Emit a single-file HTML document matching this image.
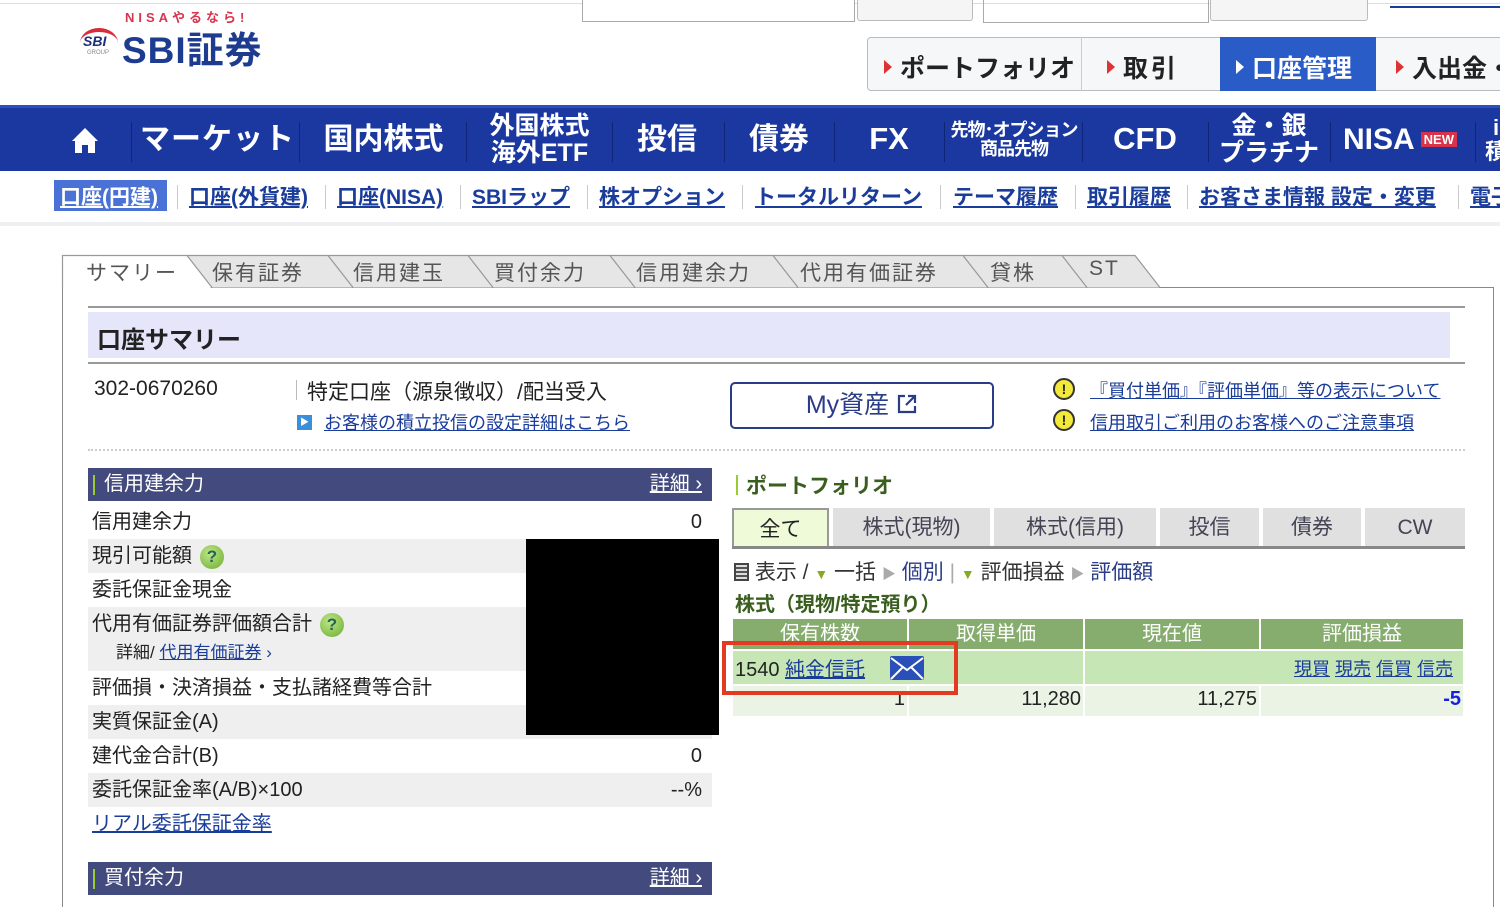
<!DOCTYPE html>
<html><head><meta charset="utf-8"><style>
*{margin:0;padding:0;box-sizing:border-box}
body{width:1500px;height:899px;overflow:hidden;background:#fff;font-family:"Liberation Sans","Noto Sans CJK JP",sans-serif;color:#222;position:relative}
.a{position:absolute;white-space:nowrap}
a,.lk{color:#1a3c9a;text-decoration:underline}
.nav{position:absolute;top:105px;left:0;width:1500px;height:66px;background:#1b38a0;border-top:3px solid #2c4fc0}
.nav .i{position:absolute;top:0;height:63px;color:#fff;font-weight:bold;display:flex;align-items:center;justify-content:center;text-align:center;line-height:1.05}
.nav .s{position:absolute;top:14px;width:1px;height:40px;background:#0f2578}
.sub{font-size:21px;font-weight:bold;top:181px}
.sep{position:absolute;top:185px;width:1px;height:24px;background:#ccc}
.tt{position:absolute;top:257px;font-size:21px;color:#555;letter-spacing:2px}
.row{position:absolute;left:88px;width:624px;height:34px;font-size:20px;line-height:34px;padding-left:4px}
.g{background:#efefef}
.bar{position:absolute;left:88px;width:624px;height:33px;background:#424a7e;color:#fff;font-size:20px;line-height:33px;padding-left:16px}
.bar:before{content:"";position:absolute;left:5px;top:7px;width:2px;height:20px;background:#9c3}
.bar span{position:absolute;right:10px;color:#fff;text-decoration:underline}
.pt{position:absolute;top:508px;height:39px;background:#e0e0e0;font-size:21px;color:#445;text-align:center;line-height:40px}
.th{position:absolute;top:619px;height:30px;background:#86ac6e;color:#fff;font-size:20px;text-align:center;line-height:30px}
.q{display:inline-block;width:24px;height:24px;border-radius:50%;background:radial-gradient(circle at 40% 35%,#bfe58a,#6aad2c);color:#265;font-size:17px;font-weight:bold;text-align:center;line-height:24px;vertical-align:middle;margin-left:8px}
.tri{display:inline-block;width:0;height:0;border-top:7px solid transparent;border-bottom:7px solid transparent;border-left:8px solid #d33;margin-right:8px;vertical-align:3px}
.tm{font-size:25px;font-weight:bold;color:#222;top:49px}
</style></head><body>
<div class="a" style="top:0;left:0;width:1500px;height:4px;border-bottom:1px solid #ddd"></div>
<!-- logo -->
<div class="a" style="left:125px;top:7px;font-size:13px;color:#d8354f;font-weight:bold;letter-spacing:4px">NISAやるなら!</div>
<div class="a" style="left:80px;top:28px;width:38px;height:30px;border-top:4px solid #d62d3a;border-radius:50% 50% 0 0;"></div>
<div class="a" style="left:83px;top:33px;font-size:14px;font-weight:bold;font-style:italic;color:#1d2f7a">SBI</div>
<div class="a" style="left:87px;top:50px;font-size:6px;color:#888">GROUP</div>
<div class="a" style="left:122px;top:20px;font-size:37px;font-weight:bold;color:#1d3c8f;letter-spacing:1px">SBI証券</div>
<!-- top search boxes -->
<div class="a" style="left:582px;top:0;width:273px;height:22px;border:1px solid #aaa;border-top:none;background:#fff"></div>
<div class="a" style="left:857px;top:0;width:116px;height:21px;border:1px solid #bbb;border-top:none;background:#f5f5f5;border-radius:0 0 3px 3px"></div>
<div class="a" style="left:983px;top:0;width:226px;height:23px;border:1px solid #aaa;border-top:none"></div>
<div class="a" style="left:1210px;top:0;width:158px;height:21px;border:1px solid #bbb;border-top:none;background:#f5f5f5;border-radius:0 0 3px 3px"></div>
<div class="a" style="left:1390px;top:0;width:110px;height:8px;border-bottom:2px solid #1a3c9a"></div>
<!-- top menu -->
<div class="a" style="left:867px;top:37px;width:640px;height:54px;border:1px solid #bbb;border-radius:4px;background:#f6f7f9"></div>
<div class="a" style="left:1081px;top:37px;width:1px;height:54px;background:#ccc"></div>
<div class="a" style="left:1220px;top:37px;width:156px;height:54px;background:#2a5cc8"></div>
<div class="a tm" style="left:884px"><span class="tri"></span>ポートフォリオ</div>
<div class="a tm" style="left:1107px;letter-spacing:3px"><span class="tri"></span>取引</div>
<div class="a tm" style="left:1236px;color:#fff"><span class="tri" style="border-left-color:#fff"></span>口座管理</div>
<div class="a tm" style="left:1396px"><span class="tri"></span>入出金・</div>
<!-- blue nav -->
<div class="nav">
<div class="i" style="left:60px;width:50px"><svg width="28" height="28" viewBox="0 0 28 28"><path d="M14 2 L27 15 L24 15 L24 27 L17 27 L17 19 L11 19 L11 27 L4 27 L4 15 L1 15 Z" fill="#fff"/></svg></div>
<div class="s" style="left:131px"></div>
<div class="i" style="left:135px;width:165px;font-size:30px;letter-spacing:1px">マーケット</div>
<div class="s" style="left:299px"></div>
<div class="i" style="left:300px;width:167px;font-size:30px">国内株式</div>
<div class="s" style="left:466px"></div>
<div class="i" style="left:467px;width:145px;font-size:25px">外国株式<br>海外ETF</div>
<div class="s" style="left:612px"></div>
<div class="i" style="left:612px;width:110px;font-size:30px">投信</div>
<div class="s" style="left:724px"></div>
<div class="i" style="left:724px;width:110px;font-size:30px">債券</div>
<div class="s" style="left:834px"></div>
<div class="i" style="left:834px;width:110px;font-size:31px">FX</div>
<div class="s" style="left:944px"></div>
<div class="i" style="left:944px;width:140px;font-size:18px;letter-spacing:-1px;white-space:nowrap">先物･オプション<br>商品先物</div>
<div class="s" style="left:1082px"></div>
<div class="i" style="left:1082px;width:126px;font-size:31px">CFD</div>
<div class="s" style="left:1208px"></div>
<div class="i" style="left:1208px;width:122px;font-size:25px">金・銀<br>プラチナ</div>
<div class="s" style="left:1330px"></div>
<div class="i" style="left:1330px;width:140px;font-size:30px">NISA<span style="background:#d9334a;color:#fff;font-size:13px;padding:1px 3px;margin-left:6px">NEW</span></div>
<div class="s" style="left:1475px"></div>
<div class="i" style="left:1486px;width:20px;font-size:22px">i<br>積</div>
</div>
<!-- sub nav -->
<div class="a" style="left:54px;top:180px;width:113px;height:31px;background:#4a72d6"></div>
<div class="a sub" style="left:60px;color:#fff;text-decoration:underline">口座(円建)</div>
<div class="a sub lk" style="left:189px">口座(外貨建)</div>
<div class="a sub lk" style="left:337px">口座(NISA)</div>
<div class="a sub lk" style="left:472px">SBIラップ</div>
<div class="a sub lk" style="left:599px">株オプション</div>
<div class="a sub lk" style="left:755px">トータルリターン</div>
<div class="a sub lk" style="left:953px">テーマ履歴</div>
<div class="a sub lk" style="left:1087px">取引履歴</div>
<div class="a sub lk" style="left:1199px">お客さま情報 設定・変更</div>
<div class="a sub lk" style="left:1470px">電子</div>
<div class="sep" style="left:177px"></div><div class="sep" style="left:325px"></div><div class="sep" style="left:460px"></div><div class="sep" style="left:587px"></div><div class="sep" style="left:742px"></div><div class="sep" style="left:940px"></div><div class="sep" style="left:1075px"></div><div class="sep" style="left:1187px"></div><div class="sep" style="left:1458px"></div>
<div class="a" style="left:0;top:222px;width:1500px;height:4px;background:#eef0f3"></div>
<!-- tabs -->
<div class="a" style="left:62px;top:287px;width:1432px;height:620px;border-left:1px solid #888;border-top:1px solid #888;border-right:1px solid #888"></div>
<svg class="a" style="left:0;top:250px" width="1200" height="40">
<g stroke="#999" stroke-width="1.2" fill="#e6e6e6">
<path d="M1062 37.5 V5.5 H1135 L1160 37.5"/>
<path d="M963 37.5 V5.5 H1062 L1087 37.5"/>
<path d="M773 37.5 V5.5 H963 L988 37.5"/>
<path d="M610 37.5 V5.5 H773 L798 37.5"/>
<path d="M468 37.5 V5.5 H610 L635 37.5"/>
<path d="M328 37.5 V5.5 H468 L493 37.5"/>
<path d="M187 37.5 V5.5 H328 L353 37.5"/>
<path d="M62.5 38 V5.5 H187 L212 37.5" fill="#fff"/>
</g>
<rect x="63.5" y="36" width="147" height="4" fill="#fff"/>
</svg>
<div class="tt" style="left:86px">サマリー</div>
<div class="tt" style="left:212px">保有証券</div>
<div class="tt" style="left:353px">信用建玉</div>
<div class="tt" style="left:494px">買付余力</div>
<div class="tt" style="left:636px">信用建余力</div>
<div class="tt" style="left:800px">代用有価証券</div>
<div class="tt" style="left:990px">貸株</div>
<div class="tt" style="left:1089px">ST</div>
<!-- summary header -->
<div class="a" style="left:88px;top:306px;width:1377px;height:2px;background:#999"></div>
<div class="a" style="left:88px;top:312px;width:1362px;height:46px;background:#e6e6fb"></div>
<div class="a" style="left:97px;top:320px;font-size:24px;font-weight:bold;color:#222">口座サマリー</div>
<div class="a" style="left:88px;top:362px;width:1377px;height:2px;background:#999"></div>
<div class="a" style="left:94px;top:377px;font-size:21px">302-0670260</div>
<div class="a" style="left:296px;top:380px;width:1px;height:20px;background:#bbb"></div>
<div class="a" style="left:307px;top:376px;font-size:21px">特定口座（源泉徴収）/配当受入</div>
<div class="a" style="left:297px;top:415px;width:15px;height:15px;background:#3b8ed8;color:#fff;font-size:9px;text-align:center;line-height:15px">▶</div>
<div class="a lk" style="left:324px;top:409px;font-size:18px">お客様の積立投信の設定詳細はこちら</div>
<div class="a" style="left:730px;top:382px;width:264px;height:47px;border:2px solid #2a3c86;border-radius:5px;text-align:center;font-size:25px;line-height:43px;color:#2a3c86">My資産 <svg width="22" height="22" viewBox="0 0 22 22" style="vertical-align:-2px"><path d="M9 3 H3 V19 H19 V13 M12 3 H19 V10 M19 3 L10 12" stroke="#2a3c86" stroke-width="2.2" fill="none"/></svg></div>
<div class="a" style="left:1053px;top:378px;width:22px;height:22px;border-radius:50%;background:#f2e93a;border:2px solid #333;text-align:center;font-weight:bold;font-size:14px;line-height:18px">!</div>
<div class="a lk" style="left:1090px;top:377px;font-size:18px">『買付単価』『評価単価』等の表示について</div>
<div class="a" style="left:1053px;top:409px;width:22px;height:22px;border-radius:50%;background:#f2e93a;border:2px solid #333;text-align:center;font-weight:bold;font-size:14px;line-height:18px">!</div>
<div class="a lk" style="left:1090px;top:409px;font-size:18px">信用取引ご利用のお客様へのご注意事項</div>
<div class="a" style="left:88px;top:449px;width:1377px;border-top:2px dotted #ccc"></div>
<!-- left table -->
<div class="bar" style="top:468px">信用建余力<span>詳細 ›</span></div>
<div class="row" style="top:505px">信用建余力<span style="position:absolute;right:10px">0</span></div>
<div class="row g" style="top:539px">現引可能額<span class="q">?</span></div>
<div class="row" style="top:573px">委託保証金現金</div>
<div class="row g" style="top:607px;height:64px">代用有価証券評価額合計<span class="q">?</span><div style="font-size:17px;line-height:24px;padding-left:24px">詳細/ <span class="lk">代用有価証券</span> <span style="color:#1a3c9a">›</span></div></div>
<div class="row" style="top:671px">評価損・決済損益・支払諸経費等合計</div>
<div class="row g" style="top:705px">実質保証金(A)</div>
<div class="row" style="top:739px">建代金合計(B)<span style="position:absolute;right:10px">0</span></div>
<div class="row g" style="top:773px">委託保証金率(A/B)×100<span style="position:absolute;right:10px">--%</span></div>
<div class="row" style="top:807px"><span class="lk">リアル委託保証金率</span></div>
<div class="a" style="left:526px;top:539px;width:193px;height:196px;background:#000"></div>
<div class="bar" style="top:862px">買付余力<span>詳細 ›</span></div>
<!-- portfolio -->
<div class="a" style="left:736px;top:475px;width:2px;height:20px;background:#9c3"></div>
<div class="a" style="left:746px;top:470px;font-size:21px;font-weight:bold;color:#3a5e1e">ポートフォリオ</div>
<div class="pt" style="left:732px;width:97px;background:#eefad8;border:2px solid #999;border-bottom:none;color:#222">全て</div>
<div class="pt" style="left:833px;width:157px">株式(現物)</div>
<div class="pt" style="left:994px;width:162px">株式(信用)</div>
<div class="pt" style="left:1160px;width:99px">投信</div>
<div class="pt" style="left:1263px;width:98px">債券</div>
<div class="pt" style="left:1365px;width:100px">CW</div>
<div class="a" style="left:732px;top:546px;width:733px;height:3px;background:#888"></div>
<div class="a" style="left:734px;top:556px;font-size:21px;color:#333"><span style="display:inline-block;width:15px;height:18px;vertical-align:-2px;border:2px solid #444;background:repeating-linear-gradient(#ddd 0 2px,#555 2px 4px)"></span> 表示 / <span style="color:#8a2;font-size:14px">▼</span> 一括 <span style="color:#aaa;font-size:14px">▶</span> <span style="color:#2a3c86">個別</span> <span style="color:#aaa">|</span> <span style="color:#8a2;font-size:14px">▼</span> 評価損益 <span style="color:#aaa;font-size:14px">▶</span> <span style="color:#2a3c86">評価額</span></div>
<div class="a" style="left:735px;top:588px;font-size:20px;font-weight:bold;color:#3a5e1e">株式（現物/特定預り）</div>
<div class="th" style="left:733px;width:174px">保有株数</div>
<div class="th" style="left:909px;width:174px">取得単価</div>
<div class="th" style="left:1085px;width:174px">現在値</div>
<div class="th" style="left:1261px;width:202px">評価損益</div>
<div class="a" style="left:733px;top:651px;width:350px;height:33px;background:#c6e6b5"></div>
<div class="a" style="left:1085px;top:651px;width:378px;height:33px;background:#c6e6b5"></div>
<div class="a" style="left:1294px;top:655px;font-size:18px"><span class="lk">現買</span> <span class="lk">現売</span> <span class="lk">信買</span> <span class="lk">信売</span></div>
<div class="a" style="left:733px;top:686px;width:174px;height:30px;background:#eaf3e4"></div>
<div class="a" style="left:909px;top:686px;width:174px;height:30px;background:#eaf3e4"></div>
<div class="a" style="left:1085px;top:686px;width:174px;height:30px;background:#eaf3e4"></div>
<div class="a" style="left:1261px;top:686px;width:202px;height:30px;background:#eaf3e4"></div>
<div class="a" style="left:733px;top:688px;width:172px;text-align:right;font-size:20px">1</div>
<div class="a" style="left:909px;top:688px;width:172px;text-align:right;font-size:20px">11,280</div>
<div class="a" style="left:1085px;top:688px;width:172px;text-align:right;font-size:20px">11,275</div>
<div class="a" style="left:1261px;top:688px;width:200px;text-align:right;font-size:20px;font-weight:bold;color:#1520e0">-5</div>
<div class="a" style="left:735px;top:653px;font-size:20px">1540 <span class="lk">純金信託</span></div>
<div class="a" style="left:890px;top:656px;width:34px;height:24px;background:#2a4fb8;border-radius:2px;overflow:hidden"><svg width="34" height="24"><path d="M1 2 L17 14 L33 2 M1 23 L13 11 M33 23 L21 11" stroke="#fff" stroke-width="2" fill="none"/></svg></div>
<div class="a" style="left:722px;top:641px;width:236px;height:54px;border:4px solid #e33a22"></div>
</body></html>
